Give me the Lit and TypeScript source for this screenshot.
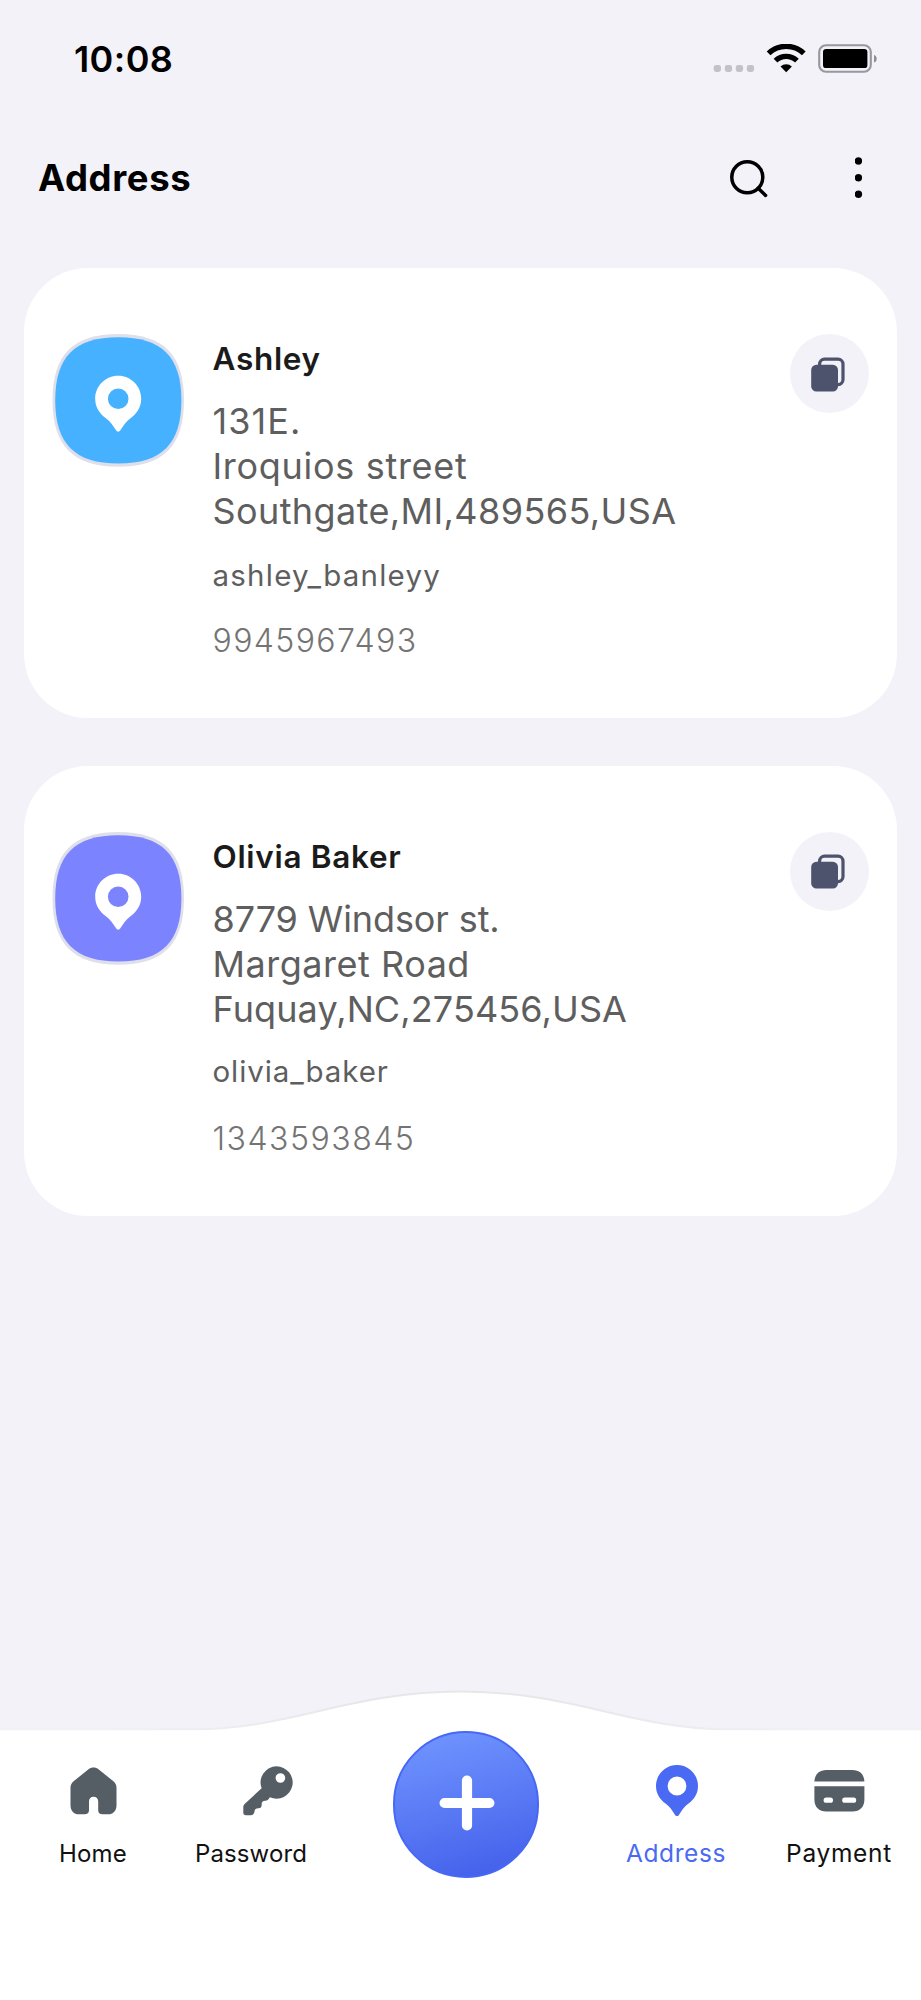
import { LitElement, html, css } from "lit";
import { customElement, property } from "lit/decorators.js";
import { classMap } from "lit/directives/class-map.js";

interface Entry {
  id: string;
  name: string;
  lines: string[];
  user: string;
  phone: string;
}

const ENTRIES: Entry[] = [
  {
    id: "ashley",
    name: "Ashley",
    lines: ["131E.", "Iroquios street", "Southgate,MI,489565,USA"],
    user: "ashley_banleyy",
    phone: "9945967493",
  },
  {
    id: "olivia",
    name: "Olivia Baker",
    lines: ["8779 Windsor st.", "Margaret Road", "Fuquay,NC,275456,USA"],
    user: "olivia_baker",
    phone: "1343593845",
  },
];

const PIN =
  "M23 0C35.7 0 46 10.3 46 23C46 31.5 41.8 37.6 35.6 42.2C30.8 45.8 28 50 25.3 54.4C24 56.5 22 56.5 20.7 54.4C18 50 15.2 45.8 10.4 42.2C4.2 37.6 0 31.5 0 23C0 10.3 10.3 0 23 0ZM23 12.7A10.3 10.3 0 1 0 23 33.3A10.3 10.3 0 1 0 23 12.7Z";

@customElement("status-bar")
export class StatusBar extends LitElement {
  static styles = css`
    :host {
      display: flex;
      align-items: center;
      justify-content: space-between;
      height: 118px;
      padding: 0 43px 0 74px;
    }
    .time {
      font-size: 36px;
      font-weight: 560;
      line-height: 44px;
      letter-spacing: 0.4px;
      color: #000;
    }
    svg {
      display: block;
    }
  `;
  render() {
    return html`
      <div class="time">10:08</div>
      <svg width="165" height="30" viewBox="0 0 165 30">
        <g fill="#c2c2c8">
          <rect x="0.7" y="21" width="7.3" height="7" rx="2.4" />
          <rect x="11.8" y="21" width="7.3" height="7" rx="2.4" />
          <rect x="22.8" y="21" width="7.3" height="7" rx="2.4" />
          <rect x="33.8" y="21" width="7.3" height="7" rx="2.4" />
        </g>
        <g transform="translate(54.2 -0.4)">
          <path
            d="M1.4 9.8A25.5 25.5 0 0 1 36.6 9.8M8.3 17A15.6 15.6 0 0 1 29.7 17"
            fill="none"
            stroke="#000"
            stroke-width="5.4"
          />
          <path
            d="M19 28.6L13.3 22.9A8.2 8.2 0 0 1 24.7 22.9Z"
            fill="#000"
          />
        </g>
        <rect
          x="106.2"
          y="1.2"
          width="51.6"
          height="26.6"
          rx="6.8"
          fill="none"
          stroke="#97979c"
          stroke-width="2.1"
        />
        <rect x="110" y="4.9" width="44.4" height="19.2" rx="3.2" fill="#000" />
        <path d="M161 11C164.6 12 164.6 17.6 161 18.6Z" fill="#8e8e93" />
      </svg>
    `;
  }
}

@customElement("address-card")
export class AddressCard extends LitElement {
  @property({ attribute: false }) entry!: Entry;

  static styles = css`
    :host {
      display: block;
    }
    .card {
      display: grid;
      grid-template-columns: 160px 1fr 79px;
      height: 450px;
      box-sizing: border-box;
      padding: 66px 28px 0 28px;
      border-radius: 64px;
      background: #fff;
    }
    svg {
      display: block;
    }
    .logo-edge {
      fill: #dfdfeb;
    }
    .ashley .logo-fill {
      fill: #46b2ff;
    }
    .olivia .logo-fill {
      fill: #7c83ff;
    }
    .text {
      padding-top: 5px;
      padding-left: 0.5px;
      color: #5e5e5e;
      white-space: nowrap;
    }
    .name {
      font-size: 31.5px;
      font-weight: 570;
      line-height: 40px;
      letter-spacing: 0.7px;
      color: #1b1b1b;
    }
    .lines {
      padding-top: 20px;
      font-size: 36px;
      line-height: 45px;
    }
    .user {
      padding-top: 21px;
      font-size: 29.5px;
      line-height: 40px;
      letter-spacing: 1.23px;
    }
    .phone {
      padding-top: 26px;
      font-size: 32px;
      font-weight: 350;
      line-height: 40px;
      letter-spacing: 1.4px;
      color: #747474;
    }
    .ashley .line:nth-child(1) {
      letter-spacing: 1.1px;
    }
    .ashley .line:nth-child(2) {
      letter-spacing: 0.7px;
    }
    .ashley .line:nth-child(3) {
      letter-spacing: 0.4px;
    }
    .olivia .line:nth-child(1) {
      letter-spacing: -0.1px;
    }
    .olivia .line:nth-child(2) {
      letter-spacing: 0.52px;
    }
    .olivia .line:nth-child(3) {
      letter-spacing: 0.11px;
    }
    .olivia .user {
      padding-top: 19px;
      letter-spacing: 0.91px;
    }
    .olivia .phone {
      padding-top: 28px;
      letter-spacing: 1.5px;
    }
    .copy {
      display: grid;
      place-items: center;
      width: 79px;
      height: 79px;
      border: 0;
      padding: 0 2.5px 0 0;
      border-radius: 50%;
      background: #f3f2f9;
    }
  `;

  render() {
    const e = this.entry;
    return html`
      <article class=${classMap({ card: true, [e.id]: true })}>
        <svg width="133" height="133" viewBox="0 0 133 133">
          <path
            class="logo-edge"
            d="M66.3 0C111.7 0 132 20.9 132 66.3C132 111.7 111.7 132.8 66.3 132.8C20.9 132.8 0.5 111.7 0.5 66.3C0.5 20.9 20.9 0 66.3 0Z"
          />
          <path
            class="logo-fill"
            d="M66.3 3.2C109.8 3.2 129.4 22.8 129.4 66.3C129.4 109.8 109.8 129.6 66.3 129.6C22.8 129.6 3.2 109.8 3.2 66.3C3.2 22.8 22.8 3.2 66.3 3.2Z"
          />
          <path fill="#fff" fill-rule="evenodd" transform="translate(43.2 41.7)" d=${PIN} />
        </svg>
        <div class="text">
          <div class="name">${e.name}</div>
          <div class="lines">
            ${e.lines.map((l) => html`<div class="line">${l}</div>`)}
          </div>
          <div class="user">${e.user}</div>
          <div class="phone">${e.phone}</div>
        </div>
        <button class="copy" aria-label="Copy">
          <svg width="36" height="36" viewBox="0 0 36 36">
            <rect
              x="9.6"
              y="3.2"
              width="23.4"
              height="25.4"
              rx="5"
              fill="none"
              stroke="#4d526d"
              stroke-width="3.2"
            />
            <rect x="1.2" y="8.7" width="26.8" height="26.8" rx="5.2" fill="#4d526d" />
          </svg>
        </button>
      </article>
    `;
  }
}

@customElement("tab-bar")
export class TabBar extends LitElement {
  static styles = css`
    :host {
      display: block;
      position: relative;
      height: 310px;
    }
    svg {
      display: block;
    }
    .wave {
      position: absolute;
      inset: 0;
    }
    .tabs {
      position: relative;
      display: grid;
      grid-template-columns: 186px 130px 300px 120px 21px 164px;
      align-items: start;
    }
    .tab {
      display: flex;
      flex-direction: column;
      align-items: center;
      padding-top: 74px;
      color: #111;
      font-size: 24px;
      font-weight: 380;
      line-height: 32px;
    }
    .icon {
      display: grid;
      place-items: center;
      height: 54px;
      margin-bottom: 20px;
      color: #565e65;
    }
    .home {
      letter-spacing: 0.23px;
    }
    .password {
      letter-spacing: 0.12px;
    }
    .password .icon {
      padding-left: 33px;
    }
    .address {
      font-size: 24.5px;
      line-height: 31px;
      letter-spacing: 0.6px;
      color: #4a6af3;
    }
    .address .icon {
      padding-left: 2px;
      color: #4a6af3;
    }
    .payment {
      grid-column: 6;
      font-size: 24.5px;
      line-height: 31px;
      letter-spacing: 0.68px;
    }
    .payment .icon {
      padding-bottom: 1px;
      height: 53px;
    }
    .fab {
      display: grid;
      place-items: center;
      box-sizing: border-box;
      width: 146.5px;
      height: 146.5px;
      margin: 41px 0 0;
      justify-self: center;
      border: 2px solid #4767f6;
      border-radius: 50%;
      padding: 0 0 2px 2px;
      background: linear-gradient(165deg, #7094ff 5%, #4360ea 95%);
    }
  `;

  render() {
    return html`
      <svg class="wave" width="921" height="310" viewBox="0 0 921 310">
        <defs>
          <linearGradient id="rim" x1="0" x2="1" y1="0" y2="0">
            <stop offset="0.1" stop-color="#f2f1f6" />
            <stop offset="0.4" stop-color="#e7e7e9" />
            <stop offset="0.6" stop-color="#e7e7e9" />
            <stop offset="0.9" stop-color="#f2f1f6" />
          </linearGradient>
        </defs>
        <path
          d="M-4 39.2H195C290 39.2 350 1.5 461 1.5S632 39.2 727 39.2H925V314H-4Z"
          fill="#fff"
          stroke="url(#rim)"
          stroke-width="2"
        />
      </svg>
      <nav class="tabs">
        <div class="tab home">
          <div class="icon">
            <svg width="47" height="48" viewBox="0 0 47 48">
              <path
                fill="currentColor"
                d="M18.2 2.4C21.6 -0.1 25.4 -0.1 28.8 2.4L42.8 13.8C45.4 15.9 46.5 17.9 46.5 21V38.2C46.5 43.6 43.3 47.3 38 47.3H32.4C29.7 47.3 28.2 45.8 28.2 43.2V34.5C28.2 31.7 26.3 29.8 23.6 29.8S19 31.7 19 34.5V43.2C19 45.8 17.4 47.3 14.7 47.3H9C3.7 47.3 0.5 43.6 0.5 38.2V21C0.5 17.9 1.6 15.9 4.2 13.8Z"
              />
            </svg>
          </div>
          Home
        </div>
        <div class="tab password">
          <div class="icon">
            <svg width="50" height="50" viewBox="0 0 50 50">
              <path
                fill="currentColor"
                fill-rule="evenodd"
                d="M33.5 0.3A16.2 16.2 0 1 1 26.9 31.3C25.8 33.2 24.6 34.6 22.2 34.8C19.6 35 18.6 36 18.7 38.4C18.8 41 17.8 42.2 15.4 42.3C12.8 42.4 11.8 43.4 11.5 45.4C11.1 47.8 9.9 49.2 7.8 49.2H3C1.2 49.2 0.3 48.2 0.3 46.4V41.2C0.3 39.9 0.7 39 1.6 38.1L18.6 22.3A16.2 16.2 0 0 1 33.5 0.3ZM37.4 7.2A4.8 4.8 0 1 0 37.4 16.8A4.8 4.8 0 1 0 37.4 7.2Z"
              />
            </svg>
          </div>
          Password
        </div>
        <button class="fab" aria-label="Add">
          <svg width="56" height="56" viewBox="0 0 56 56">
            <path
              d="M28 5.6V50.4M5.6 28H50.4"
              fill="none"
              stroke="#fff"
              stroke-width="10.2"
              stroke-linecap="round"
            />
          </svg>
        </button>
        <div class="tab address">
          <div class="icon">
            <svg width="42" height="51.5" viewBox="0 0 46 56.4">
              <path fill="currentColor" fill-rule="evenodd" d=${PIN} />
            </svg>
          </div>
          Address
        </div>
        <div class="tab payment">
          <div class="icon">
            <svg width="51" height="44" viewBox="0 0 51 44">
              <path
                fill="currentColor"
                d="M0.4 12.4C0.8 5 5.4 1 12.4 1H38.4C45.4 1 50 5 50.4 12.4Z"
              />
              <path
                fill="currentColor"
                fill-rule="evenodd"
                d="M0.4 17.2H50.4V30.4C50.4 38 45.8 42.4 38.4 42.4H12.4C5 42.4 0.4 38 0.4 30.4ZM12.2 28.6A2.6 2.6 0 0 0 12.2 33.8H16.4A2.6 2.6 0 0 0 16.4 28.6ZM30.8 28.6A2.6 2.6 0 0 0 30.8 33.8H39.6A2.6 2.6 0 0 0 39.6 28.6Z"
              />
            </svg>
          </div>
          Payment
        </div>
      </nav>
    `;
  }
}

@customElement("app-root")
export class AppRoot extends LitElement {
  static styles = css`
    :host {
      display: flex;
      flex-direction: column;
      width: 921px;
      height: 2000px;
      overflow: hidden;
      background: #f3f2f9;
      font-family: Inter, Roboto, sans-serif;
    }
    .header {
      display: flex;
      align-items: center;
      height: 120px;
      padding: 0 58px 0 38px;
    }
    h1 {
      flex: 1;
      margin: 0;
      font-size: 36.5px;
      font-weight: 680;
      line-height: 44px;
      letter-spacing: 0.6px;
      color: #000;
    }
    .header svg {
      display: block;
    }
    .more {
      margin-left: 85px;
    }
    .list {
      flex: 1;
      display: flex;
      flex-direction: column;
      gap: 47.5px;
      padding: 30px 24px 0;
    }
  `;

  render() {
    return html`
      <status-bar></status-bar>
      <header class="header">
        <h1>Address</h1>
        <svg width="40" height="40" viewBox="0 0 40 40">
          <g fill="none" stroke="#000" stroke-width="3.5">
            <circle cx="17.3" cy="19.3" r="15.5" />
            <path d="M28.2 30.2L35.6 37.4" stroke-linecap="round" />
          </g>
        </svg>
        <svg class="more" width="8" height="44" viewBox="0 0 8 44">
          <circle cx="3.4" cy="5" r="3.7" />
          <circle cx="3.4" cy="21.7" r="3.7" />
          <circle cx="3.4" cy="38.3" r="3.7" />
        </svg>
      </header>
      <main class="list">
        ${ENTRIES.map((e) => html`<address-card .entry=${e}></address-card>`)}
      </main>
      <tab-bar></tab-bar>
    `;
  }
}
